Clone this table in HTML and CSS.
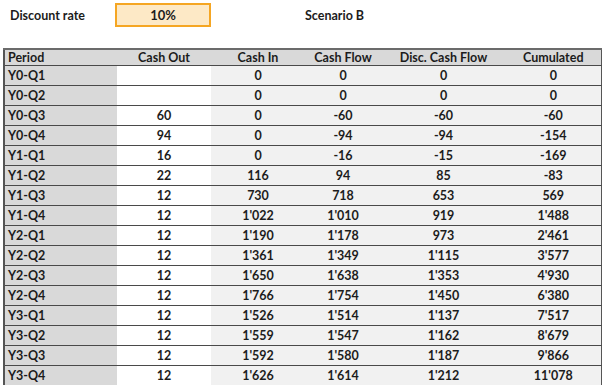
FILE: index.html
```html
<!DOCTYPE html>
<html>
<head>
<meta charset="utf-8">
<link rel="stylesheet" href="styles.css">
</head>
<body>
<div class="top">
  <div class="label">Discount rate</div>
  <div class="rate">10%</div>
  <div class="scenario">Scenario B</div>
</div>
<table class="grid">
  <colgroup>
    <col class="c-period"><col class="c-out"><col class="c-in"><col class="c-flow"><col class="c-disc"><col class="c-cum">
  </colgroup>
  <thead>
    <tr><th class="period">Period</th><th>Cash Out</th><th>Cash In</th><th>Cash Flow</th><th>Disc. Cash Flow</th><th>Cumulated</th></tr>
  </thead>
  <tbody>
    <tr><td class="period">Y0-Q1</td><td class="out"></td><td>0</td><td>0</td><td>0</td><td>0</td></tr>
    <tr><td class="period">Y0-Q2</td><td class="out"></td><td>0</td><td>0</td><td>0</td><td>0</td></tr>
    <tr><td class="period">Y0-Q3</td><td class="out">60</td><td>0</td><td>-60</td><td>-60</td><td>-60</td></tr>
    <tr><td class="period">Y0-Q4</td><td class="out">94</td><td>0</td><td>-94</td><td>-94</td><td>-154</td></tr>
    <tr><td class="period">Y1-Q1</td><td class="out">16</td><td>0</td><td>-16</td><td>-15</td><td>-169</td></tr>
    <tr><td class="period">Y1-Q2</td><td class="out">22</td><td>116</td><td>94</td><td>85</td><td>-83</td></tr>
    <tr><td class="period">Y1-Q3</td><td class="out">12</td><td>730</td><td>718</td><td>653</td><td>569</td></tr>
    <tr><td class="period">Y1-Q4</td><td class="out">12</td><td>1'022</td><td>1'010</td><td>919</td><td>1'488</td></tr>
    <tr><td class="period">Y2-Q1</td><td class="out">12</td><td>1'190</td><td>1'178</td><td>973</td><td>2'461</td></tr>
    <tr><td class="period">Y2-Q2</td><td class="out">12</td><td>1'361</td><td>1'349</td><td>1'115</td><td>3'577</td></tr>
    <tr><td class="period">Y2-Q3</td><td class="out">12</td><td>1'650</td><td>1'638</td><td>1'353</td><td>4'930</td></tr>
    <tr><td class="period">Y2-Q4</td><td class="out">12</td><td>1'766</td><td>1'754</td><td>1'450</td><td>6'380</td></tr>
    <tr><td class="period">Y3-Q1</td><td class="out">12</td><td>1'526</td><td>1'514</td><td>1'137</td><td>7'517</td></tr>
    <tr><td class="period">Y3-Q2</td><td class="out">12</td><td>1'559</td><td>1'547</td><td>1'162</td><td>8'679</td></tr>
    <tr><td class="period">Y3-Q3</td><td class="out">12</td><td>1'592</td><td>1'580</td><td>1'187</td><td>9'866</td></tr>
    <tr><td class="period">Y3-Q4</td><td class="out">12</td><td>1'626</td><td>1'614</td><td>1'212</td><td>11'078</td></tr>
  </tbody>
</table>
</body>
</html>
```

FILE: styles.css
```css
html, body {
  margin: 0;
  padding: 0;
  background: #ffffff;
}
body {
  font-family: "Lato", "DejaVu Sans", sans-serif;
  font-weight: bold;
  font-size: 12.5px;
  color: #1c1c1c;
  width: 602px;
  height: 385px;
  overflow: hidden;
}
.top {
  display: flex;
  align-items: center;
  height: 24px;
  padding: 3px 0 0 10px;
}
.label {
  width: 105px;
}
.rate {
  box-sizing: border-box;
  width: 96px;
  height: 24px;
  border: 2px solid #f5a623;
  background: #fde9c6;
  text-align: center;
  line-height: 20px;
  font-size: 13px;
}
.scenario {
  margin-left: 94px;
}
.grid {
  margin: 21px 0 0 3px;
  border-collapse: collapse;
  table-layout: fixed;
  width: 597px;
  border-top: 2px solid #6b6b6b;
  border-left: 2px solid #555;
  border-right: 1px solid #555;
}
.c-period { width: 113px; }
.c-out { width: 94px; }
.c-in { width: 94px; }
.c-flow { width: 76px; }
.c-disc { width: 125px; }
.c-cum { width: 95px; }
.grid th, .grid td {
  height: 19px;
  padding: 0;
  text-align: center;
  border-bottom: 1px solid #4a4a4a;
  background: #f1f1f1;
  white-space: nowrap;
}
.grid th {
  height: 15px;
  background: #d9d9d9;
  font-weight: bold;
}
.grid .period {
  text-align: left;
  padding-left: 3px;
  background: #d9d9d9;
}
.grid td.out {
  background: #ffffff;
}
```
